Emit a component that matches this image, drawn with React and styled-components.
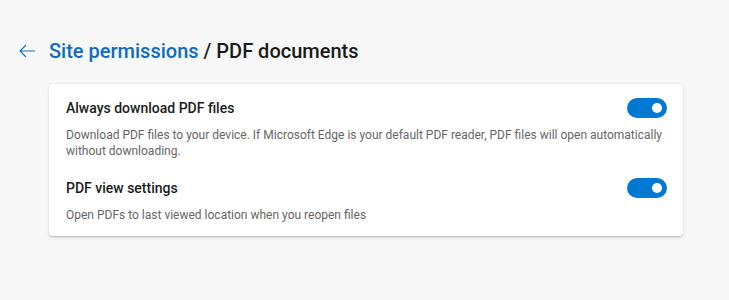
import React from "react";
import styled, { createGlobalStyle } from "styled-components";

const Global = createGlobalStyle`
  html, body { margin: 0; padding: 0; background: #f7f7f7; }
  body { font-family: Roboto, "Open Sans", sans-serif; }
`;

const Page = styled.div`
  width: 729px;
  height: 300px;
  box-sizing: border-box;
  padding: 37px 46px 0 19px;
`;

const Header = styled.div`
  display: flex;
  align-items: center;
  gap: 14px;
  height: 28px;
`;

const BackButton = styled.button`
  border: 0;
  background: none;
  padding: 0;
  width: 16px;
  height: 16px;
  display: flex;
  align-items: center;
  justify-content: center;
  cursor: pointer;
`;

const Title = styled.h1`
  margin: 0;
  font-size: 20px;
  line-height: 28px;
  font-weight: 500;
  color: #1b1b1b;
`;

const Crumb = styled.span`
  color: #0f6cbd;
`;

const Card = styled.div`
  margin: 19px 0 0 30px;
  background: #fff;
  border-radius: 4px;
  box-shadow: 0 0.3px 1px rgba(0,0,0,0.13), 0 1.6px 3.6px rgba(0,0,0,0.12);
  padding: 14px 16px 13px 17px;
  display: flex;
  flex-direction: column;
  gap: 19px;
`;

const Setting = styled.div`
  display: grid;
  grid-template-columns: 1fr auto;
  column-gap: 16px;
  row-gap: 9px;
`;

const Label = styled.div`
  font-size: 14px;
  font-weight: 500;
  color: #1b1b1b;
  line-height: 20px;
`;

const Desc = styled.div`
  grid-column: 1 / -1;
  font-size: 12px;
  color: #666;
  line-height: 16px;
  padding-right: 4px;
`;

const Toggle = styled.div`
  width: 40px;
  height: 20px;
  border-radius: 10px;
  background: #0078d4;
  position: relative;
  &::after {
    content: "";
    position: absolute;
    right: 5px;
    top: 5px;
    width: 10px;
    height: 10px;
    border-radius: 50%;
    background: #fff;
  }
`;

export default function App() {
  return (
    <>
      <Global />
      <Page>
        <Header>
          <BackButton aria-label="Back">
            <svg width="16" height="14" viewBox="0 0 16 14" fill="none" stroke="#0f6cbd" strokeWidth="1.1">
              <path d="M16 7H1M7 1L1 7l6 6" />
            </svg>
          </BackButton>
          <Title><Crumb>Site permissions</Crumb> / PDF documents</Title>
        </Header>
        <Card>
          <Setting>
            <Label>Always download PDF files</Label>
            <Toggle />
            <Desc>Download PDF files to your device. If Microsoft Edge is your default PDF reader, PDF files will open automatically without downloading.</Desc>
          </Setting>
          <Setting>
            <Label>PDF view settings</Label>
            <Toggle />
            <Desc>Open PDFs to last viewed location when you reopen files</Desc>
          </Setting>
        </Card>
      </Page>
    </>
  );
}
